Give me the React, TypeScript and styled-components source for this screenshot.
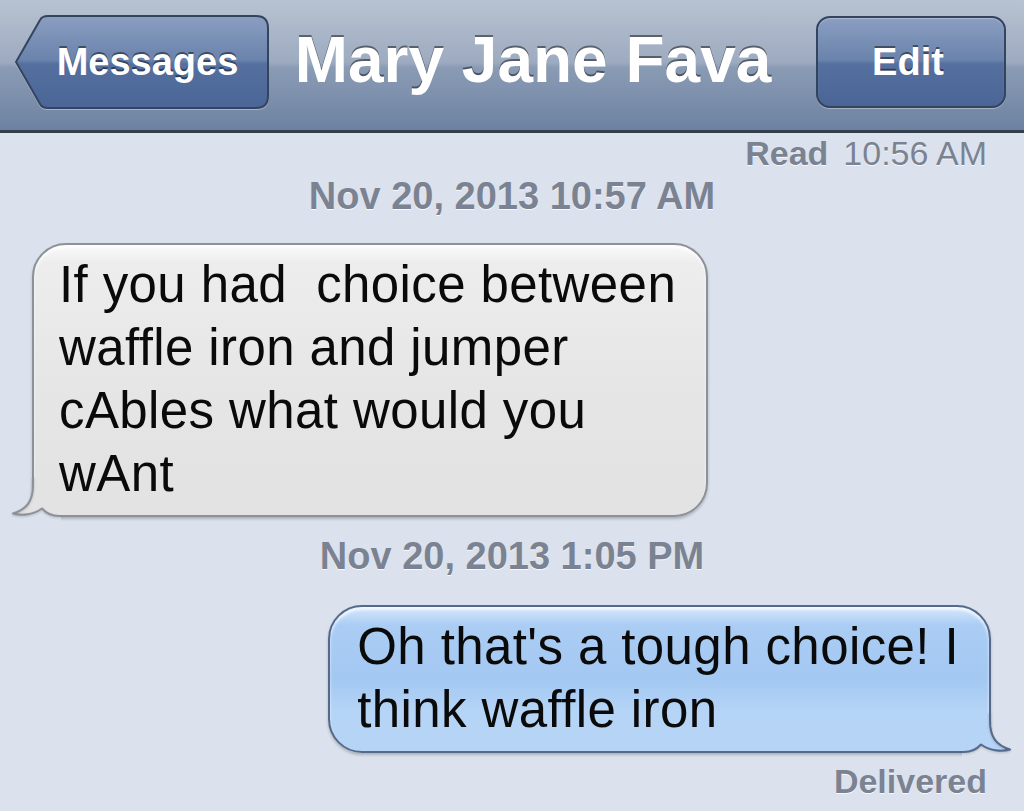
import React from 'react';
import styled, { createGlobalStyle } from 'styled-components';

const GlobalStyle = createGlobalStyle`
  html, body {
    margin: 0;
    padding: 0;
    background: #dbe2ed;
  }
  body {
    font-family: "Liberation Sans", Arial, Helvetica, sans-serif;
  }
`;

const Screen = styled.div`
  width: 1024px;
  height: 811px;
  overflow: hidden;
  background: #dbe2ed;
  display: flex;
  flex-direction: column;
`;

const NavBar = styled.header`
  box-sizing: border-box;
  height: 133px;
  flex-shrink: 0;
  display: flex;
  align-items: flex-start;
  padding: 14px 18px 0 13px;
  border-bottom: 3px solid #343d4b;
  background: linear-gradient(
    #b8c2d1 0%,
    #9dabc0 48%,
    #8a9bb4 52%,
    #6d82a2 100%
  );
`;

const BackButton = styled.div`
  position: relative;
  box-sizing: border-box;
  width: 257px;
  height: 96px;
  flex-shrink: 0;
  display: flex;
  align-items: center;
  justify-content: center;
  padding-left: 12px;

  svg {
    position: absolute;
    inset: 0;
    filter: drop-shadow(0 1px 0 rgba(255, 255, 255, 0.35));
  }
`;

const ButtonLabel = styled.span`
  position: relative;
  font-size: 38px;
  line-height: 38px;
  font-weight: bold;
  color: #fff;
  text-shadow: 0 -2px 0 rgba(0, 0, 0, 0.45);
`;

const Title = styled.h1`
  flex: 1;
  margin: 14px 0 0;
  padding-right: 20px;
  text-align: center;
  font-size: 64px;
  line-height: 64px;
  font-weight: bold;
  color: #fff;
  white-space: nowrap;
  text-shadow: 0 -2px 0 rgba(0, 0, 0, 0.45);
`;

const EditButton = styled.div`
  box-sizing: border-box;
  width: 190px;
  height: 92px;
  margin-top: 2px;
  flex-shrink: 0;
  display: flex;
  align-items: center;
  justify-content: center;
  padding-right: 6px;
  border: 2px solid #34445e;
  border-radius: 14px;
  background: linear-gradient(#8a9ec0 0%, #6a83ac 48%, #55709f 52%, #4a6696 100%);
  box-shadow: 0 1px 0 rgba(255, 255, 255, 0.35),
    inset 0 1px 1px rgba(255, 255, 255, 0.3);
`;

const Thread = styled.main`
  display: flex;
  flex-direction: column;
`;

const Status = styled.div<{ $top: number }>`
  margin-top: ${(p) => p.$top}px;
  padding-right: 37px;
  text-align: right;
  font-size: 34px;
  line-height: 34px;
  color: #7b8392;
  text-shadow: 0 1px 0 rgba(255, 255, 255, 0.8);

  b {
    font-weight: bold;
  }
  span {
    margin-left: 15px;
  }
`;

const DateHeader = styled.div<{ $top: number }>`
  margin-top: ${(p) => p.$top}px;
  text-align: center;
  font-size: 38px;
  line-height: 38px;
  font-weight: bold;
  color: #7b8392;
  text-shadow: 0 1px 0 rgba(255, 255, 255, 0.8);
`;

const BubbleRow = styled.div<{ $sent?: boolean; $top: number }>`
  display: flex;
  justify-content: ${(p) => (p.$sent ? 'flex-end' : 'flex-start')};
  margin-top: ${(p) => p.$top}px;
  padding: 0 33px 0 32px;
`;

const GRAY_END = '#e3e3e3';
const BLUE_END = '#b5d4f6';

const Bubble = styled.div<{ $sent?: boolean }>`
  position: relative;
  border: 2px solid ${(p) => (p.$sent ? '#56698a' : '#8d9198')};
  border-radius: 34px;
  ${(p) =>
    p.$sent ? 'border-bottom-right-radius: 16px;' : 'border-bottom-left-radius: 16px;'}
  padding: 8px 30px 10px ${(p) => (p.$sent ? 27 : 25)}px;
  background: ${(p) =>
    p.$sent
      ? `linear-gradient(#d6e8fb 0px, #abcdf4 18px, #a3c8f2 50%, ${BLUE_END} calc(100% - 40px))`
      : `linear-gradient(#fafafa 0px, #ededed 18px, #e6e6e6 50%, ${GRAY_END} calc(100% - 40px))`};
  box-shadow: 0 2px 3px rgba(0, 0, 0, 0.22),
    inset 0 3px 3px rgba(255, 255, 255, 0.7);
  font-size: 51px;
  line-height: 63px;
  letter-spacing: 0.4px;
  color: #0a0a0a;
  white-space: pre;
`;

const BubbleText = styled.span`
  position: relative;
  z-index: 1;
`;

const TailSvg = styled.svg<{ $sent?: boolean }>`
  position: absolute;
  bottom: -6px;
  ${(p) => (p.$sent ? 'right: -22px; transform: scaleX(-1);' : 'left: -22px;')}
  width: 48px;
  height: 44px;
  overflow: visible;
`;

const tailEdge =
  'M21,0 L21,8 C21,24 15,32 1,36.5 C10,39 22,37.5 30,31.5 C34,36 40,39 47,39';

const Tail = ({ sent }: { sent?: boolean }) => (
  <TailSvg $sent={sent} viewBox="0 0 48 44">
    <rect x="19" y="12" width="30" height="32" fill="#dbe2ed" />
    <path d={tailEdge + ' L49,39 L49,0 Z'} fill={sent ? BLUE_END : GRAY_END} />
    <path
      d={tailEdge + ' L49,39'}
      fill="none"
      stroke={sent ? '#56698a' : '#8d9198'}
      strokeWidth="2"
      strokeLinejoin="round"
      style={{ filter: 'drop-shadow(0 1.5px 1px rgba(0,0,0,0.18))' }}
    />
  </TailSvg>
);

const BackShape = () => (
  <svg width="257" height="96" viewBox="0 0 257 96">
    <defs>
      <linearGradient id="backFill" x1="0" y1="0" x2="0" y2="1">
        <stop offset="0" stopColor="#8a9ec0" />
        <stop offset="0.48" stopColor="#6a83ac" />
        <stop offset="0.52" stopColor="#55709f" />
        <stop offset="1" stopColor="#4a6696" />
      </linearGradient>
    </defs>
    <path
      d="M3,48 L27,6 Q29,2 35,2 L243,2 Q255,2 255,14 L255,82 Q255,94 243,94 L35,94 Q29,94 27,90 Z"
      fill="url(#backFill)"
      stroke="#34445e"
      strokeWidth="2"
      strokeLinejoin="round"
    />
  </svg>
);

export default function App() {
  return (
    <Screen>
      <GlobalStyle />
      <NavBar>
        <BackButton>
          <BackShape />
          <ButtonLabel>Messages</ButtonLabel>
        </BackButton>
        <Title>Mary Jane Fava</Title>
        <EditButton>
          <ButtonLabel>Edit</ButtonLabel>
        </EditButton>
      </NavBar>
      <Thread>
        <Status $top={3}>
          <b>Read</b>
          <span>10:56 AM</span>
        </Status>
        <DateHeader $top={7}>Nov 20, 2013 10:57 AM</DateHeader>
        <BubbleRow $top={28}>
          <Bubble>
            <BubbleText>
              {'If you had  choice between\nwaffle iron and jumper\ncAbles what would you\nwAnt'}
            </BubbleText>
            <Tail />
          </Bubble>
        </BubbleRow>
        <DateHeader $top={20}>Nov 20, 2013 1:05 PM</DateHeader>
        <BubbleRow $sent $top={30}>
          <Bubble $sent>
            <BubbleText>{"Oh that's a tough choice! I\nthink waffle iron"}</BubbleText>
            <Tail sent />
          </Bubble>
        </BubbleRow>
        <Status $top={11}>
          <b>Delivered</b>
        </Status>
      </Thread>
    </Screen>
  );
}
